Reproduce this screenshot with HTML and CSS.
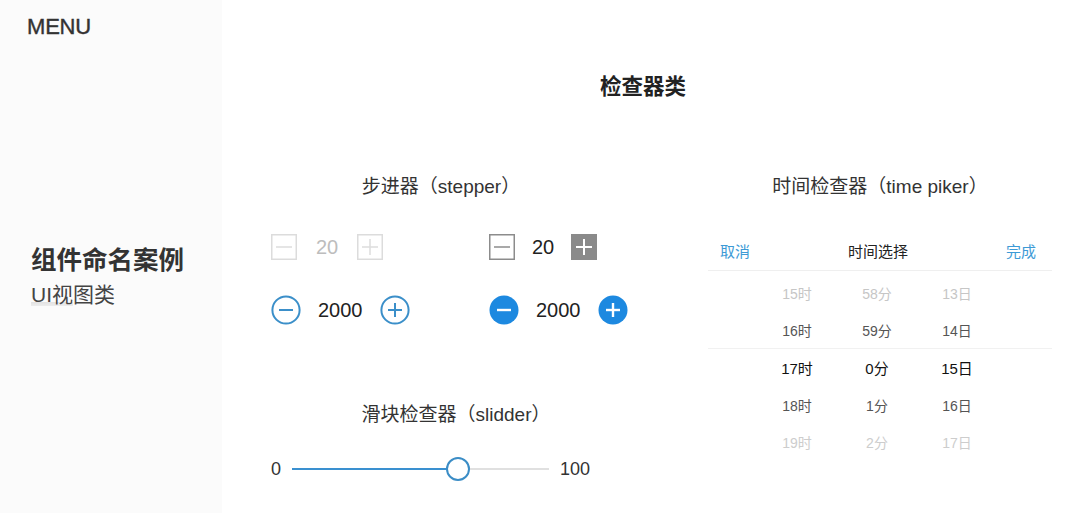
FILE: index.html
```html
<!DOCTYPE html>
<html lang="zh">
<head>
<meta charset="utf-8">
<title>检查器类</title>
<link rel="stylesheet" href="styles.css">
</head>
<body>
<div class="page">
  <aside class="sidebar">
    <div class="menu">MENU</div>
    <div class="case">
      <h1 class="case-title">组件命名案例</h1>
      <p class="case-sub"><span class="hl">UI视</span>图类</p>
    </div>
  </aside>
  <main class="main">
    <h2 class="page-title">检查器类</h2>
    <div class="cols">
      <section class="left">
        <h3 class="sec-title stepper-title">步进器（stepper）</h3>
        <div class="stepper-grid">
          <div class="stepper off">
            <svg class="ic" width="26" height="26" viewBox="0 0 26 26"><rect x="0.75" y="0.75" width="24.5" height="24.5" fill="none" stroke="#dcdcdc" stroke-width="1.5"/><line x1="5" y1="13" x2="21" y2="13" stroke="#dcdcdc" stroke-width="1.5"/></svg>
            <span class="num disabled">20</span>
            <svg class="ic" width="26" height="26" viewBox="0 0 26 26"><rect x="0.75" y="0.75" width="24.5" height="24.5" fill="none" stroke="#dcdcdc" stroke-width="1.5"/><line x1="5" y1="13" x2="21" y2="13" stroke="#dcdcdc" stroke-width="1.5"/><line x1="13" y1="5" x2="13" y2="21" stroke="#dcdcdc" stroke-width="1.5"/></svg>
          </div>
          <div class="stepper">
            <svg class="ic" width="26" height="26" viewBox="0 0 26 26"><rect x="0.75" y="0.75" width="24.5" height="24.5" fill="none" stroke="#8c8c8c" stroke-width="1.5"/><line x1="5" y1="13" x2="21" y2="13" stroke="#8c8c8c" stroke-width="1.5"/></svg>
            <span class="num">20</span>
            <svg class="ic" width="26" height="26" viewBox="0 0 26 26"><rect x="0" y="0" width="26" height="26" fill="#8a8a8a"/><line x1="5" y1="13" x2="21" y2="13" stroke="#fff" stroke-width="2"/><line x1="13" y1="5" x2="13" y2="21" stroke="#fff" stroke-width="2"/></svg>
          </div>
          <div class="stepper">
            <svg class="ic" width="30" height="30" viewBox="0 0 30 30"><circle cx="15" cy="15" r="13.6" fill="none" stroke="#3b8fc9" stroke-width="2"/><line x1="8" y1="15" x2="22" y2="15" stroke="#3b8fc9" stroke-width="2"/></svg>
            <span class="num">2000</span>
            <svg class="ic" width="30" height="30" viewBox="0 0 30 30"><circle cx="15" cy="15" r="13.6" fill="none" stroke="#3b8fc9" stroke-width="2"/><line x1="8" y1="15" x2="22" y2="15" stroke="#3b8fc9" stroke-width="2"/><line x1="15" y1="8" x2="15" y2="22" stroke="#3b8fc9" stroke-width="2"/></svg>
          </div>
          <div class="stepper">
            <svg class="ic" width="30" height="30" viewBox="0 0 30 30"><circle cx="15" cy="15" r="14.5" fill="#1d89e0"/><line x1="8" y1="15" x2="22" y2="15" stroke="#fff" stroke-width="2.4"/></svg>
            <span class="num">2000</span>
            <svg class="ic" width="30" height="30" viewBox="0 0 30 30"><circle cx="15" cy="15" r="14.5" fill="#1d89e0"/><line x1="8" y1="15" x2="22" y2="15" stroke="#fff" stroke-width="2.4"/><line x1="15" y1="8" x2="15" y2="22" stroke="#fff" stroke-width="2.4"/></svg>
          </div>
        </div>
        <h3 class="sec-title slider-title">滑块检查器（slidder）</h3>
        <div class="slider">
          <span class="slider-val">0</span>
          <div class="track">
            <div class="track-fill" style="width: 64.5%"></div>
            <div class="thumb" style="left: 64.5%"></div>
          </div>
          <span class="slider-val">100</span>
        </div>
      </section>
      <section class="right">
        <h3 class="sec-title">时间检查器（time piker）</h3>
        <div class="picker">
          <div class="picker-head">
            <span class="link cancel">取消</span>
            <span class="head-title">时间选择</span>
            <span class="link done">完成</span>
          </div>
          <div class="picker-body">
            <div class="prow faint"><span>15时</span><span>58分</span><span>13日</span></div>
            <div class="prow near"><span>16时</span><span>59分</span><span>14日</span></div>
            <div class="prow current"><span>17时</span><span>0分</span><span>15日</span></div>
            <div class="prow near"><span>18时</span><span>1分</span><span>16日</span></div>
            <div class="prow faint2"><span>19时</span><span>2分</span><span>17日</span></div>
          </div>
        </div>
      </section>
    </div>
  </main>
</div>
</body>
</html>
```

FILE: styles.css
```css
* { box-sizing: border-box; }
html, body { margin: 0; padding: 0; background: #fff; }
body {
  font-family: "Liberation Sans", "Noto Sans CJK SC", sans-serif;
  color: #333;
  width: 1080px;
  height: 513px;
  overflow: hidden;
}
.page { display: flex; height: 513px; }

.sidebar {
  width: 222px;
  flex: none;
  background: #fbfbfb;
  padding: 14px 0 0 27px;
}
.menu {
  font-size: 22px;
  line-height: 25px;
  color: #333;
  -webkit-text-stroke: 0.4px #333;
  letter-spacing: -0.2px;
}
.case { margin-top: 204px; padding-left: 4px; }
.case-title {
  margin: 0;
  font-family: "Noto Sans CJK SC", sans-serif;
  font-size: 25.5px;
  line-height: 30px;
  font-weight: 700;
  color: #333;
}
.case-sub {
  margin: 10px 0 0;
  font-family: "Liberation Sans", "Noto Sans CJK SC", sans-serif;
  font-size: 21px;
  line-height: 24px;
  color: #444;
}
.hl {
  background: linear-gradient(to bottom, transparent 82%, #e2e2e2 82%, #ececec 100%);
}

.main { flex: 1; padding: 73px 28px 0 49px; }
.page-title {
  margin: 0;
  text-align: center;
  padding-right: 37px;
  font-family: "Noto Sans CJK SC", sans-serif;
  font-size: 21.5px;
  line-height: 24px;
  font-weight: 700;
  color: #222;
}
.cols {
  margin-top: 80px;
  display: flex;
  gap: 77px;
}
.left { width: 360px; flex: none; }
.right { width: 344px; flex: none; }

.sec-title {
  margin: 0;
  text-align: center;
  font-size: 19px;
  line-height: 20px;
  font-weight: 400;
  color: #333;
}
.stepper-title { padding-right: 20px; }

.stepper-grid {
  margin-top: 35px;
  display: grid;
  grid-template-columns: 218px auto;
  row-gap: 33px;
}
.stepper {
  display: flex;
  align-items: center;
  gap: 17px;
  height: 30px;
}
.stepper.off { gap: 19px; }
.ic { display: block; flex: none; }
.num { font-size: 20px; color: #222; }
.num.disabled { color: #bdbdbd; }

.slider-title { margin-top: 80px; padding-left: 10px; }
.slider {
  margin-top: 32px;
  display: flex;
  align-items: center;
  gap: 11px;
  height: 24px;
}
.slider-val { font-size: 18px; color: #333; }
.track {
  position: relative;
  width: 257px;
  height: 2px;
  background: #e0e0e0;
}
.track-fill {
  height: 2px;
  background: #3a90d0;
}
.thumb {
  position: absolute;
  top: -11px;
  width: 24px;
  height: 24px;
  margin-left: -12px;
  border-radius: 50%;
  background: #fff;
  border: 2.5px solid #3b8dc6;
}

.picker { margin-top: 33px; }
.picker-head {
  display: grid;
  grid-template-columns: 1fr auto 1fr;
  align-items: center;
  height: 41px;
  padding: 0 16px 0 12px;
  border-bottom: 1px solid #efefef;
  font-size: 15px;
}
.link { color: #3d9ad6; }
.done { justify-self: end; }
.head-title { color: #222; }
.picker-body { padding: 3px 0 0 49px; }
.prow {
  display: grid;
  grid-template-columns: 80px 80px 80px;
  height: 37px;
  align-items: center;
  text-align: center;
  font-size: 14px;
}
.prow.faint { color: #c6c6c6; }
.prow.near { color: #555; }
.prow.current {
  color: #111;
  font-size: 15px;
  border-top: 1px solid #f1f1f1;
  margin-left: -49px;
  padding-left: 49px;
  height: 38px;
}
.prow.faint2 { color: #cdcdcd; }
```
